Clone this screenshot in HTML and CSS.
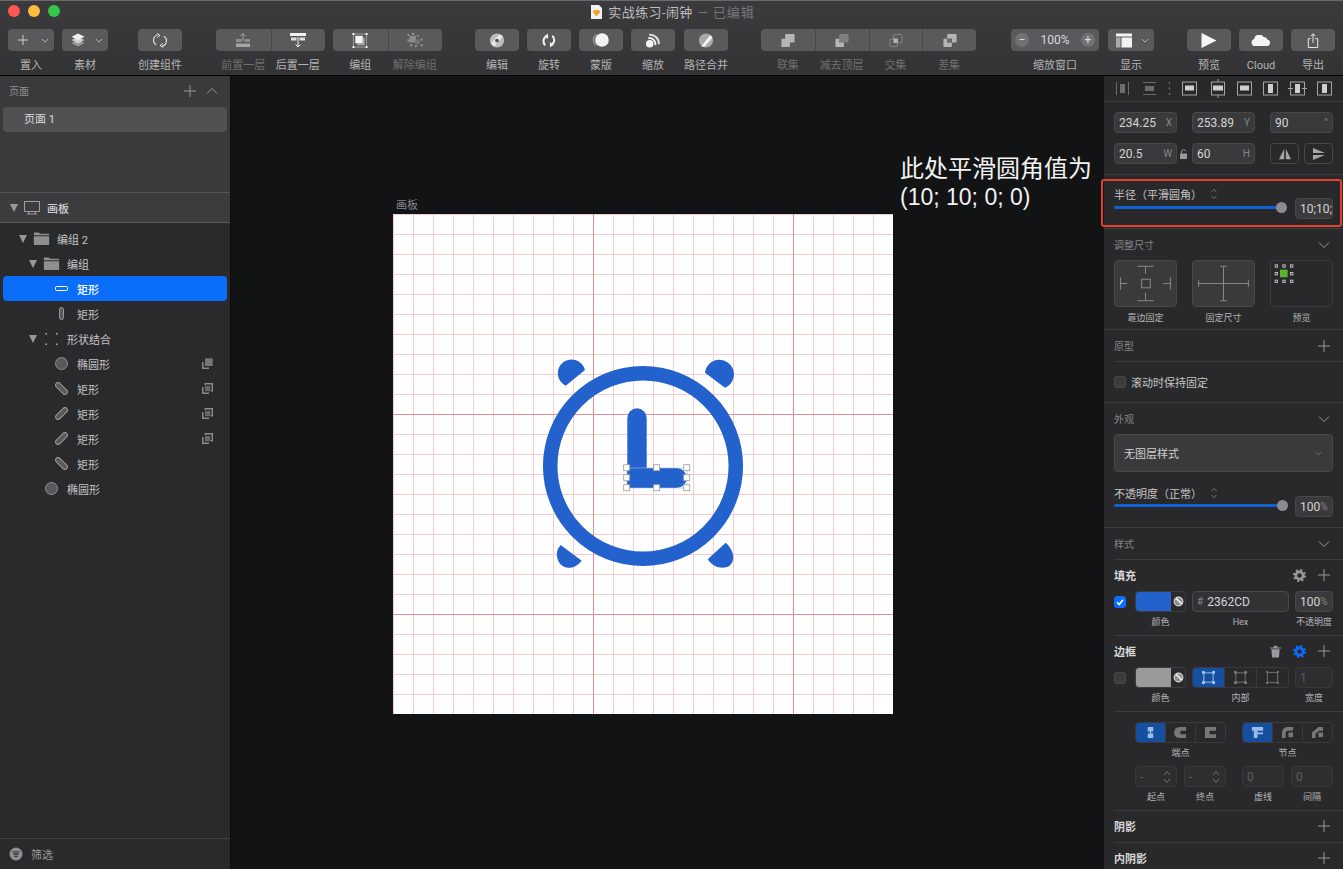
FILE: index.html
```html
<!DOCTYPE html>
<html lang="zh">
<head>
<meta charset="utf-8">
<title>实战练习-闹钟</title>
<link rel="stylesheet" href="styles.css">
</head>
<body>
<svg class="defs" aria-hidden="true">
  <symbol id="plus" viewBox="0 0 12 12"><path d="M6 0v12M0 6h12" fill="none" stroke="currentColor"/></symbol>
  <symbol id="chev" viewBox="0 0 12 8"><path d="M1 1.500l5 5 5-5" fill="none" stroke="currentColor"/></symbol>
  <symbol id="tri" viewBox="0 0 10 8"><path d="M1 0h8L5 8z" fill="currentColor"/></symbol>
  <symbol id="folder" viewBox="0 0 17 14"><path d="M0 1.500C0 .8.5.5 1 .5h4.500L7 2h9c.6 0 1 .3 1 .8v.7H0z M0 4.500h17v8.500c0 .6-.4 1-1 1H1c-.6 0-1-.4-1-1z" fill="#8f8f91"/></symbol>
  <symbol id="ell" viewBox="0 0 13 13"><circle cx="6.500" cy="6.500" r="6" fill="#59595b" stroke="#8f8f91"/></symbol>
  <symbol id="diag1" viewBox="0 0 13 13"><rect x="-.8" y="4" width="14.600" height="5" rx="2.500" transform="rotate(45 6.500 6.500)" fill="#59595b" stroke="#98989a"/></symbol>
  <symbol id="diag2" viewBox="0 0 13 13"><rect x="-.8" y="4" width="14.600" height="5" rx="2.500" transform="rotate(-45 6.500 6.500)" fill="#59595b" stroke="#98989a"/></symbol>
  <symbol id="bool" viewBox="0 0 11 11"><path d="M.8 4v6.200H7" fill="none" stroke="#8b8b8d" stroke-width="1.500"/><path d="M3.300 2.200V.8h7v7H8.600" fill="none" stroke="#8b8b8d" stroke-width="1.400"/><rect x="3" y="3" width="5.200" height="5.200" fill="#68686a"/></symbol>
  <symbol id="boolf" viewBox="0 0 11 11"><path d="M.8 4v6.200H7" fill="none" stroke="#8b8b8d" stroke-width="1.500"/><rect x="3" y=".3" width="7.700" height="7.700" fill="#77777a"/></symbol>
  <symbol id="updown" viewBox="0 0 8 14"><path d="M1 5l3-3.500L7 5M1 9l3 3.500L7 9" fill="none" stroke="currentColor"/></symbol>
  <symbol id="gear" viewBox="0 0 14 14"><circle cx="7" cy="7" r="3.900" fill="none" stroke="currentColor" stroke-width="2.800"/><circle cx="7" cy="7" r="6" fill="none" stroke="currentColor" stroke-width="2" stroke-dasharray="2.300 2.410"/></symbol>
  <symbol id="picker" viewBox="0 0 10 10"><circle cx="5" cy="5" r="4" fill="#8c8c8e" stroke="#d8d8d8"/><path d="M2 2.500l5.500 5.500 1-1.500L3.500 1.500z" fill="#e8e8e8"/></symbol>
  <symbol id="border-box" viewBox="0 0 14 14"><path d="M2 2h10v10H2z" fill="none" stroke="currentColor"/><path d="M0 0h3v3H0zM11 0h3v3h-3zM0 11h3v3H0zM11 11h3v3h-3z" fill="currentColor"/></symbol>
</svg>

<div class="app">
  <header class="toolbar">
    <div class="titlebar">
      <div class="lights"><i class="light red"></i><i class="light amber"></i><i class="light green"></i></div>
      <svg class="doc" viewBox="0 0 11 14"><path d="M0 0h8l3 3v11H0z" fill="#f2f2f2"/><path d="M5.500 11.500L1.800 7l1.200-2h5l1.200 2z" fill="#efa02d"/></svg>
      <span class="title">实战练习-闹钟</span><span class="title-dim">— 已编辑</span>
    </div>
    <div class="tools">
      <div class="tool w46"><div class="btn split"><svg class="i10 bright" viewBox="0 0 12 12"><use href="#plus"/></svg><svg class="ic bright" viewBox="0 0 12 8"><use href="#chev"/></svg></div><span>置入</span></div>
      <div class="tool w46"><div class="btn split"><svg class="i16" viewBox="0 0 16 14"><path d="M8 6.500L1.500 9.500 8 13l6.500-3.500z" fill="#9b9b9b"/><path d="M8 3.500L1.500 6.500 8 10l6.500-3.500z" fill="#cfcfcf"/><path d="M8 0L1.500 3.300 8 6.800l6.500-3.500z" fill="#f0f0f0"/></svg><svg class="ic bright" viewBox="0 0 12 8"><use href="#chev"/></svg></div><span>素材</span></div>
      <div class="tool w44 ml22"><div class="btn"><svg class="i16" viewBox="0 0 14 16"><path d="M5 2.200A5.500 5.500 0 0 0 3 12.500M9 13.800A5.500 5.500 0 0 0 11 3.500" fill="none" stroke="#e4e4e4" stroke-width="1.200"/><path d="M3.500 .5L7 2.500 4 5M10.500 15.500L7 13.500 10 11" fill="none" stroke="#e4e4e4"/></svg></div><span>创建组件</span></div>

      <div class="group w109 ml26">
        <div class="tool off"><div class="btn"><svg class="i16" viewBox="0 0 16 15"><path d="M8 8V1M5.500 3L8 .5 10.500 3" fill="none" stroke="#a5a5a5"/><path d="M1 6h5.500v3H9.500V6H15v3H1z" fill="#8d8d8d"/><rect x="1" y="10.500" width="14" height="3.500" fill="#a5a5a5"/></svg></div><span>前置一层</span></div>
        <div class="tool"><div class="btn"><svg class="i16" viewBox="0 0 16 15"><rect x="0" y="0" width="16" height="3" fill="#f2f2f2"/><path d="M1 4.500h5.500v3H1zM9.500 4.500H15v3H9.500z" fill="#e0e0e0"/><path d="M8 4v10M5.500 11.500L8 14l2.500-2.500" fill="none" stroke="#f2f2f2"/></svg></div><span>后置一层</span></div>
      </div>
      <div class="group w109">
        <div class="tool"><div class="btn"><svg class="i16" viewBox="0 0 16 16"><path d="M1 1h14v14H1z" fill="none" stroke="#bdbdbd" stroke-width=".7"/><rect x="3" y="3" width="8" height="8" fill="#f5f5f5"/><path d="M11 5h2v8H5v-2h6z" fill="#a9a9a9"/><path d="M0 0h2v2H0zM14 0h2v2h-2zM0 14h2v2H0zM14 14h2v2h-2z" fill="#fff"/></svg></div><span>编组</span></div>
        <div class="tool off"><div class="btn"><svg class="i16" viewBox="0 0 16 16"><rect x="2" y="3" width="7" height="7" fill="#8d8d8d"/><rect x="8" y="7" width="5" height="5" fill="#747474"/><path d="M0 1h2v2H0zM5 0h2v2H5zM10 2h2v2h-2zM14 6h2v2h-2zM14 12h2v2h-2zM8 13h2v2H8zM3 12h2v2H3zM0 7h2v2H0z" fill="#9a9a9a"/></svg></div><span>解除编组</span></div>
      </div>

      <div class="tool w44 ml25"><div class="btn"><svg class="i16" viewBox="0 0 16 16"><circle cx="8" cy="8" r="7.500" fill="#bcbcbc"/><path d="M1.500 11L11 1.200l3.500 2.500L5 14.500z" fill="#e9e9e9"/><circle cx="8" cy="8" r="2" fill="#555"/></svg></div><span>编辑</span></div>
      <div class="tool w44"><div class="btn"><svg class="i16" viewBox="0 0 16 16"><path d="M5 3.500A6 6 0 0 0 4 13" fill="none" stroke="#f0f0f0" stroke-width="2.200"/><path d="M11 12.500A6 6 0 0 0 11.500 3" fill="none" stroke="#f0f0f0" stroke-width="2.200"/><path d="M7 .5v6L3 3.500zM9 15.500v-6l4 3z" fill="#f0f0f0"/></svg></div><span>旋转</span></div>
      <div class="tool w44"><div class="btn"><svg class="i18" viewBox="0 0 18 16"><path d="M4 2.500a7 7 0 0 0 0 11" fill="none" stroke="#999" stroke-width="1.200"/><rect x="2.500" y="2.500" width="3" height="11" fill="#7c7c7c"/><circle cx="10" cy="8" r="6.800" fill="#f4f4f4"/></svg></div><span>蒙版</span></div>
      <div class="tool w44"><div class="btn"><svg class="i16" viewBox="0 0 16 16"><circle cx="4.500" cy="11.500" r="4" fill="#f4f4f4"/><path d="M3 5.500A6.500 6.500 0 0 1 10.500 13" fill="none" stroke="#f4f4f4" stroke-width="2.200"/><path d="M4 1.800A9.500 9.500 0 0 1 14.200 12" fill="none" stroke="#e0e0e0" stroke-width="2.200"/></svg></div><span>缩放</span></div>
      <div class="tool w44 ml1"><div class="btn"><svg class="i16" viewBox="0 0 16 16"><circle cx="8" cy="8" r="7.500" fill="#aaa"/><path d="M3 14L12.500 2l2.500 3-9 10z" fill="#f4f4f4"/></svg></div><span>路径合并</span></div>

      <div class="group w215 ml25">
        <div class="tool off"><div class="btn"><svg class="i16" viewBox="0 0 16 16"><path d="M6 1h8c.6 0 1 .4 1 1v7c0 .6-.4 1-1 1h-4v4c0 .6-.4 1-1 1H2c-.6 0-1-.4-1-1V7c0-.6.4-1 1-1h3V2c0-.6.4-1 1-1z" fill="#b5b5b5"/></svg></div><span>联集</span></div>
        <div class="tool off"><div class="btn"><svg class="i16" viewBox="0 0 16 16"><rect x="5" y="1" width="10" height="9" rx="1.500" fill="#808080"/><path d="M2 6h3v4h5v4c0 .6-.4 1-1 1H2c-.6 0-1-.4-1-1V7c0-.6.4-1 1-1z" fill="#b5b5b5"/></svg></div><span>减去顶层</span></div>
        <div class="tool off"><div class="btn"><svg class="i16" viewBox="0 0 16 16"><rect x="5.500" y="1.500" width="9" height="9" rx="1.500" fill="none" stroke="#8a8a8a"/><rect x="1.500" y="6.500" width="8" height="8" rx="1.500" fill="none" stroke="#8a8a8a"/><rect x="5.500" y="6" width="4.500" height="4.500" fill="#b5b5b5"/></svg></div><span>交集</span></div>
        <div class="tool off"><div class="btn"><svg class="i16" viewBox="0 0 16 16"><path d="M6 1h8c.6 0 1 .4 1 1v7c0 .6-.4 1-1 1h-4V6H5V2c0-.6.4-1 1-1zM2 6h3v4h5v4c0 .6-.4 1-1 1H2c-.6 0-1-.4-1-1V7c0-.6.4-1 1-1z" fill="#b5b5b5"/><rect x="5" y="6" width="5" height="4" fill="#6a6a6a"/></svg></div><span>差集</span></div>
      </div>

      <div class="tool w88 ml27"><div class="btn zoom"><i class="zbtn">−</i><b class="zval">100%</b><i class="zbtn">+</i></div><span>缩放窗口</span></div>
      <div class="tool w46 ml1"><div class="btn split"><svg class="i16" viewBox="0 0 16 14"><rect width="16" height="3" fill="#f2f2f2"/><rect y="4" width="4.500" height="10" fill="#aaa"/><rect x="5.500" y="4" width="10.500" height="10" fill="#f2f2f2"/></svg><svg class="ic bright" viewBox="0 0 12 8"><use href="#chev"/></svg></div><span>显示</span></div>

      <div class="tool w44 ml25"><div class="btn"><svg class="i16" viewBox="0 0 14 14"><path d="M0 0l14 7L0 14z" fill="#f6f6f6"/></svg></div><span>预览</span></div>
      <div class="tool w44"><div class="btn"><svg class="i20" viewBox="0 0 20 11"><path d="M4 11a3.500 3.500 0 0 1-.8-6.900A5 5 0 0 1 12.500 2 3.800 3.800 0 0 1 16.500 4.500 3.300 3.300 0 0 1 16 11z" fill="#f6f6f6"/></svg></div><span>Cloud</span></div>
      <div class="tool w44"><div class="btn"><svg class="i16" viewBox="0 0 12 16"><path d="M3.500 6H1v9.500h10V6H8.500" fill="none" stroke="#f2f2f2"/><path d="M6 10.500V1M3.500 3.300L6 .8l2.500 2.500" fill="none" stroke="#f2f2f2"/></svg></div><span>导出</span></div>
    </div>
  </header>

  <div class="main">
    <aside class="layers">
      <section class="pages">
        <div class="pages-head"><span>页面</span><svg class="i12 grey plus-a" viewBox="0 0 12 12"><use href="#plus"/></svg><svg class="i-chev grey flip" viewBox="0 0 12 8"><use href="#chev"/></svg></div>
        <div class="page-item">页面 1</div>
      </section>
      <div class="artboard-row">
        <svg class="tri t-ab" viewBox="0 0 10 8"><use href="#tri"/></svg>
        <svg class="ab-ic" viewBox="0 0 16 14"><path d="M.5.5h15v10H.5zM3 13h10M5 10.500L4.500 13M11 10.500l.5 2.500" fill="none" stroke="#a0a0a2"/></svg>
        <span>画板</span>
      </div>
      <div class="list">
        <div class="layer l0"><svg class="tri" viewBox="0 0 10 8"><use href="#tri"/></svg><svg class="lic" viewBox="0 0 17 14"><use href="#folder"/></svg><span>编组 2</span></div>
        <div class="layer l1"><svg class="tri" viewBox="0 0 10 8"><use href="#tri"/></svg><svg class="lic" viewBox="0 0 17 14"><use href="#folder"/></svg><span>编组</span></div>
        <div class="layer l2 sel"><i class="tri"></i><svg class="lic pill" viewBox="0 0 13 5"><rect x=".5" y=".5" width="12" height="4" rx="1" fill="none" stroke="#fff"/></svg><span>矩形</span></div>
        <div class="layer l2"><i class="tri"></i><svg class="lic" viewBox="0 0 5 13"><rect x=".5" y=".5" width="4" height="12" rx="2" fill="#59595b" stroke="#98989a"/></svg><span>矩形</span></div>
        <div class="layer l1"><svg class="tri" viewBox="0 0 10 8"><use href="#tri"/></svg><svg class="lic small" viewBox="0 0 12 12"><path d="M0 0h1.500v1.500H0zM10.500 0H12v1.500h-1.500zM0 10.500h1.500V12H0zM10.500 10.500H12V12h-1.500z" fill="#b5b5b5"/></svg><span>形状结合</span></div>
        <div class="layer l2"><i class="tri"></i><svg class="lic" viewBox="0 0 13 13"><use href="#ell"/></svg><span>椭圆形</span><svg class="op" viewBox="0 0 11 11"><use href="#boolf"/></svg></div>
        <div class="layer l2"><i class="tri"></i><svg class="lic" viewBox="0 0 13 13"><use href="#diag1"/></svg><span>矩形</span><svg class="op" viewBox="0 0 11 11"><use href="#bool"/></svg></div>
        <div class="layer l2"><i class="tri"></i><svg class="lic" viewBox="0 0 13 13"><use href="#diag2"/></svg><span>矩形</span><svg class="op" viewBox="0 0 11 11"><use href="#bool"/></svg></div>
        <div class="layer l2"><i class="tri"></i><svg class="lic" viewBox="0 0 13 13"><use href="#diag2"/></svg><span>矩形</span><svg class="op" viewBox="0 0 11 11"><use href="#bool"/></svg></div>
        <div class="layer l2"><i class="tri"></i><svg class="lic" viewBox="0 0 13 13"><use href="#diag1"/></svg><span>矩形</span></div>
        <div class="layer l1"><i class="tri"></i><svg class="lic" viewBox="0 0 13 13"><use href="#ell"/></svg><span>椭圆形</span></div>
      </div>
      <div class="filter"><svg class="f-ic" viewBox="0 0 14 14"><circle cx="7" cy="7" r="6.500" fill="#8f8f91"/><path d="M3.500 5h7M4.500 7.200h5M5.500 9.400h3" stroke="#2a2a2c" stroke-width="1.200"/></svg><span>筛选</span></div>
    </aside>

    <main class="canvas">
      <span class="ab-label">画板</span>
      <div class="artboard">
        <svg class="clock" viewBox="393 214 500 500">
          <circle cx="643" cy="466" r="92.800" fill="none" stroke="#2362cd" stroke-width="14.500"/>
          <path d="M585 370A13.800 13.800 0 1 0 565.700 385.700Z" fill="#2362cd"/>
          <path d="M705 372.700A14.500 14.500 0 1 1 725 387.700Z" fill="#2362cd"/>
          <path d="M560.700 545C556 550 555.500 557 559.500 563C564 569.500 574 570 581.700 560.700Z" fill="#2362cd"/>
          <path d="M707.700 559.300C712 566 720 569.500 727 567C735 564 736 552 725.700 542.700Z" fill="#2362cd"/>
          <path d="M627.300 488V418a9.700 9.700 0 0 1 19.400 0V488Z" fill="#2362cd"/>
          <path d="M627 468H676.700a10 10 0 0 1 0 20H627Z" fill="#2362cd"/>
          <rect x="627" y="468" width="60" height="20" fill="none" stroke="#9fb8e6" stroke-width=".6"/>
          <g fill="#fff" stroke="#9a9a9a" stroke-width=".8">
            <rect x="623.700" y="464.700" width="6" height="6"/><rect x="653.700" y="464.700" width="6" height="6"/><rect x="683.700" y="464.700" width="6" height="6"/>
            <rect x="623.700" y="474.700" width="6" height="6"/><rect x="683.700" y="474.700" width="6" height="6"/>
            <rect x="623.700" y="484.700" width="6" height="6"/><rect x="653.700" y="484.700" width="6" height="6"/><rect x="683.700" y="484.700" width="6" height="6"/>
          </g>
        </svg>
      </div>
      <p class="note"><span class="note-a">此处平滑圆角值为</span><span class="note-b">(10; 10; 0; 0)</span></p>
    </main>

    <aside class="inspector">
      <svg class="align-svg" viewBox="0 0 239 25">
        <g fill="none" stroke="#6c6c6e"><path d="M12.500 6v13M24.500 6v13M39 6.500h13M39 18.500h13"/></g>
        <rect x="16" y="8" width="5" height="9" fill="#6c6c6e"/><rect x="41" y="10" width="9" height="5" fill="#6c6c6e"/>
        <path d="M65.500 6v2M65.500 11.500v2M65.500 17v2" stroke="#6c6c6e" stroke-width="1.500"/>
        <g fill="none" stroke="#a5a5a7">
          <rect x="78.500" y="6" width="14" height="13"/><rect x="107.500" y="6" width="13" height="13"/><rect x="133.500" y="6" width="14" height="13"/>
          <rect x="159.500" y="6" width="14" height="13"/><rect x="186.500" y="6" width="14" height="13"/><rect x="213.500" y="6" width="14" height="13"/>
        </g>
        <g fill="#cfcfd1"><rect x="81" y="9.500" width="9" height="5"/><rect x="109" y="9.500" width="10" height="5"/><rect x="136" y="9.500" width="9" height="5"/><rect x="164" y="8" width="5" height="9"/><rect x="191" y="8" width="5" height="9"/><rect x="218" y="8" width="5" height="9"/></g>
        <path d="M114 3v3M114 19v3M184 12.500h5M198 12.500h5" stroke="#a5a5a7"/>
      </svg>

      <section class="sec sec-geom">
        <div class="row3">
          <div class="field"><span>234.25</span><em>X</em></div>
          <div class="field"><span>253.89</span><em>Y</em></div>
          <div class="field"><span>90</span><em>°</em></div>
        </div>
        <div class="row3">
          <div class="field lockwrap"><span>20.5</span><em>W</em><svg class="lock" viewBox="0 0 8 10"><path d="M1.500 4.500V3a2.200 2.200 0 0 1 4.300-.7" fill="none" stroke="#9a9a9c"/><rect y="4.500" width="7" height="5.500" fill="#9a9a9c"/></svg></div>
          <div class="field"><span>60</span><em>H</em></div>
          <div class="flips">
            <div class="field flip-b"><svg class="i12x" viewBox="0 0 14 12"><path d="M6 0v12H0zM8 0v12h6z" fill="#a5a5a7"/></svg></div>
            <div class="field flip-b"><svg class="i12x" viewBox="0 0 12 12"><path d="M0 0l12 5H0zM0 7h12L0 12z" fill="#a5a5a7"/></svg></div>
          </div>
        </div>
      </section>

      <section class="sec sec-radius">
        <div class="lbl-line"><span>半径（平滑圆角）</span><svg class="ud" viewBox="0 0 8 14"><use href="#updown"/></svg></div>
        <div class="slide-row"><div class="slider s-r"><i></i></div><div class="field val"><span>10;10;</span></div></div>
      </section>

      <section class="sec">
        <div class="head"><span>调整尺寸</span><svg class="ic-h grey" viewBox="0 0 12 8"><use href="#chev"/></svg></div>
        <div class="row3 r-box">
          <div class="cbox"><svg viewBox="0 0 63 47"><g fill="none" stroke="#8c8c8e"><path d="M23 5.500h17M31.500 5.500v8M23 41.500h17M31.500 33v8.500M5.500 17v13M5.500 23.500h7M57.500 17v13M50 23.500h7.500"/><rect x="27.500" y="19" width="9" height="9"/></g></svg></div>
          <div class="cbox"><svg viewBox="0 0 63 47"><path d="M5.500 23.500h52M31.500 5.500v36M5.500 20v7M57.500 20v7M28 5.500h7M28 41.500h7" fill="none" stroke="#8c8c8e"/></svg></div>
          <div class="cbox dark"><svg viewBox="0 0 63 47"><rect x="9" y="9" width="8" height="8" fill="#5cb531"/><g fill="none" stroke="#d0d0d0" stroke-width=".9"><rect x="4" y="4" width="2.500" height="2.500"/><rect x="12" y="4" width="2.500" height="2.500"/><rect x="20" y="4" width="2.500" height="2.500"/><rect x="4" y="12" width="2.500" height="2.500"/><rect x="20" y="12" width="2.500" height="2.500"/><rect x="4" y="20" width="2.500" height="2.500"/><rect x="12" y="20" width="2.500" height="2.500"/><rect x="20" y="20" width="2.500" height="2.500"/></g></svg></div>
        </div>
        <div class="row3 caps"><span>靠边固定</span><span>固定尺寸</span><span>预览</span></div>
      </section>

      <section class="sec-plain">
        <div class="head inset-line"><span>原型</span><svg class="i12 grey" viewBox="0 0 12 12"><use href="#plus"/></svg></div>
        <div class="check-row"><i class="cb"></i><span>滚动时保持固定</span></div>
      </section>

      <section class="sec sec-look">
        <div class="head"><span>外观</span><svg class="ic-h grey" viewBox="0 0 12 8"><use href="#chev"/></svg></div>
        <div class="select"><span>无图层样式</span><svg class="ic-s" viewBox="0 0 12 8"><use href="#chev"/></svg></div>
        <div class="lbl-line mt13"><span>不透明度（正常）</span><svg class="ud" viewBox="0 0 8 14"><use href="#updown"/></svg></div>
        <div class="slide-row"><div class="slider"><i></i></div><div class="field val"><span>100</span><em>%</em></div></div>
      </section>

      <section class="sec-bare">
        <div class="head inset-line"><span>样式</span><svg class="ic-h grey" viewBox="0 0 12 8"><use href="#chev"/></svg></div>
      </section>

      <section class="sec-bare">
        <div class="sub-wrap">
          <div class="subhead"><b>填充</b><svg class="gear" viewBox="0 0 14 14"><use href="#gear"/></svg><svg class="i12 grey" viewBox="0 0 12 12"><use href="#plus"/></svg></div>
          <div class="fill-row">
            <i class="cb on"><svg viewBox="0 0 10 10"><path d="M2 5.200l2.200 2.300L8 2.800" fill="none" stroke="#fff" stroke-width="1.600"/></svg></i>
            <div class="swatch"><i class="sw-blue"></i><svg viewBox="0 0 10 10"><use href="#picker"/></svg></div>
            <div class="field hex"><em>#</em><span>2362CD</span></div>
            <div class="field val"><span>100</span><em>%</em></div>
          </div>
          <div class="fill-caps"><span class="c1">颜色</span><span class="c2">Hex</span><span class="c3">不透明度</span></div>
        </div>
      </section>

      <section class="sec-bare">
        <div class="sub-wrap">
          <div class="subhead"><b>边框</b><svg class="trash" viewBox="0 0 12 13"><path d="M0 2h12v1.200H0zM4 .2h4V2H4zM1.500 4h9l-.7 9H2.200z" fill="#9a9a9c"/></svg><svg class="gear gear-on" viewBox="0 0 14 14"><use href="#gear"/></svg><svg class="i12 grey" viewBox="0 0 12 12"><use href="#plus"/></svg></div>
          <div class="fill-row">
            <i class="cb"></i>
            <div class="swatch"><i class="sw-gray"></i><svg viewBox="0 0 10 10"><use href="#picker"/></svg></div>
            <div class="seg w97">
              <div class="on"><svg viewBox="0 0 14 14"><use href="#border-box"/></svg></div>
              <div><svg viewBox="0 0 14 14"><use href="#border-box"/></svg></div>
              <div><svg viewBox="0 0 14 14"><path d="M1.500 1.500h11v11h-11z" fill="none" stroke="currentColor"/><path d="M0 0h2v2H0zM12 0h2v2h-2zM0 12h2v2H0zM12 12h2v2h-2z" fill="currentColor"/></svg></div>
            </div>
            <div class="field val off"><span>1</span></div>
          </div>
          <div class="fill-caps"><span class="c1">颜色</span><span class="c2">内部</span><span class="c3">宽度</span></div>
        </div>
      </section>

      <section class="sec-bare">
        <div class="sub-wrap top10">
          <div class="two-seg">
            <div class="seg">
              <div class="on"><svg viewBox="0 0 14 14"><path d="M4 1h6v5H4zM4 8h6v5H4z" fill="#9dbbe8"/><path d="M7 6v2" stroke="#fff"/></svg></div>
              <div><svg viewBox="0 0 14 14"><path d="M6 1h7v4H7v4h6v4H6A6 6 0 0 1 6 1z" fill="#77777a"/></svg></div>
              <div><svg viewBox="0 0 14 14"><path d="M1 1h12v4H6v4h7v4H1z" fill="#77777a"/></svg></div>
            </div>
            <div class="seg">
              <div class="on"><svg viewBox="0 0 14 14"><path d="M1 1h12v4H7v2h6v2H7v4H3V5H1z" fill="#9dbbe8"/></svg></div>
              <div><svg viewBox="0 0 14 14"><path d="M7 1h6v4H8a3 3 0 0 0-3 3v5H1V7a6 6 0 0 1 6-6z" fill="#77777a"/><rect x="8" y="7" width="5" height="5" fill="#77777a"/></svg></div>
              <div><svg viewBox="0 0 14 14"><path d="M8 1h5v4H9L5 8v5H1V7z" fill="#77777a"/><rect x="8" y="7" width="5" height="5" fill="#77777a"/></svg></div>
            </div>
          </div>
          <div class="two-caps"><span>端点</span><span>节点</span></div>
          <div class="dash-row">
            <div class="field off stepper"><span>-</span><svg class="ud2" viewBox="0 0 8 14"><use href="#updown"/></svg></div>
            <div class="field off stepper"><span>-</span><svg class="ud2" viewBox="0 0 8 14"><use href="#updown"/></svg></div>
            <div class="field off num ml8"><span>0</span></div>
            <div class="field off num"><span>0</span></div>
          </div>
          <div class="dash-caps"><span>起点</span><span>终点</span><span class="ml8">虚线</span><span>间隔</span></div>
        </div>
      </section>

      <section class="sec-bare">
        <div class="head bold"><b>阴影</b><svg class="i12 grey" viewBox="0 0 12 12"><use href="#plus"/></svg></div>
      </section>
      <section class="sec-bare">
        <div class="head bold"><b>内阴影</b><svg class="i12 grey" viewBox="0 0 12 12"><use href="#plus"/></svg></div>
      </section>
    </aside>
  </div>
  <div class="redbox"></div>
</div>
</body>
</html>
```

FILE: styles.css
```css
* { box-sizing: border-box; }
html, body { margin: 0; padding: 0; height: 100%; }
body {
  background: #121315;
  font-family: Roboto, "Noto Sans CJK SC", sans-serif;
  font-size: 11px;
  color: #c4c4c6;
  overflow: hidden;
}
.defs { position: absolute; width: 0; height: 0; }
svg { display: block; flex: none; }
i, em { font-style: normal; }
.app { position: relative; width: 1343px; height: 869px; display: flex; flex-direction: column; overflow: hidden; }

/* toolbar */
.toolbar { height: 76px; flex: none; background: linear-gradient(#3b3b3d, #333335); border-top: 1px solid #6a6a6c; border-bottom: 1px solid #000; }
.titlebar { position: relative; height: 28px; display: flex; justify-content: center; align-items: center; padding: 0 0 7px 3px; }
.lights { position: absolute; left: 8px; top: 4px; display: flex; gap: 8px; }
.light { width: 12px; height: 12px; border-radius: 50%; display: block; }
.red { background: #fc5753; }
.amber { background: #fdbc40; }
.green { background: #33c748; }
.doc { width: 11px; height: 14px; margin-right: 6px; }
.title { font-size: 13px; color: #bdbdbf; letter-spacing: .4px; }
.title-dim { font-size: 13px; color: #77777a; margin-left: 5px; letter-spacing: .9px; }
.tools { display: flex; gap: 8px; padding-left: 8px; }
.tool { display: flex; flex-direction: column; align-items: stretch; text-align: center; }
.tool > span { margin-top: 9px; font-size: 11px; line-height: 12px; height: 12px; color: #b4b4b6; white-space: nowrap; }
.tool.off > span { color: #6f6f71; }
.btn { height: 22px; background: #5a5a5c; border-radius: 4px; display: flex; align-items: center; justify-content: center; }
.btn.split { justify-content: space-between; padding: 0 5px 0 8px; }
.w44 { width: 44px; }
.w46 { width: 46px; }
.w88 { width: 88px; }
.w109 { width: 109px; }
.w215 { width: 215px; }
.ml1 { margin-left: 1px; }
.ml22 { margin-left: 22px; }
.ml25 { margin-left: 25px; }
.ml26 { margin-left: 26px; }
.ml27 { margin-left: 27px; }
.group { display: flex; }
.group .tool { flex: 1 1 0; }
.group .btn { border-radius: 0; border-left: 1px solid #484849; }
.group .tool:first-child .btn { border-radius: 4px 0 0 4px; border-left: 0; }
.group .tool:last-child .btn { border-radius: 0 4px 4px 0; }
.i10 { width: 10px; height: 10px; margin-left: 2px; }
.i12 { width: 12px; height: 12px; }
.i16 { width: 16px; height: 15px; }
.i18 { width: 18px; height: 16px; }
.i20 { width: 20px; height: 11px; }
.ic { width: 8px; height: 5px; }
.ic-h, .i-chev { width: 12px; height: 8px; }
.bright { color: #e8e8e8; }
.grey { color: #98989a; }
.zoom { justify-content: space-between; padding: 0 4px; }
.zbtn { width: 14px; height: 14px; border-radius: 50%; background: #727274; color: #dedede; font-size: 12px; line-height: 14px; text-align: center; display: block; }
.zval { font-weight: 400; font-size: 12px; color: #d8d8da; }

/* layers */
.main { flex: 1; display: flex; min-height: 0; }
.layers { width: 231px; flex: none; background: #2a2a2c; border-right: 1px solid #0c0c0d; display: flex; flex-direction: column; }
.pages { height: 117px; flex: none; background: #3a3a3c; border-bottom: 1px solid #555557; }
.pages-head { height: 31px; display: flex; align-items: center; padding: 0 12px 2px 9px; color: #8f8f91; font-size: 10px; }
.pages-head span { flex: 1; }
.plus-a { margin-right: 10px; }
.flip { transform: scaleY(-1); }
.page-item { height: 25px; margin: 0 3px; padding-left: 21px; background: #515153; border-radius: 4px; line-height: 25px; color: #dcdcde; font-size: 11px; }
.artboard-row { height: 30px; flex: none; display: flex; align-items: center; background: #3c3c3e; border-bottom: 1px solid #58585a; padding-left: 9px; color: #d0d0d2; font-weight: 500; }
.tri { width: 10px; height: 8px; color: #98989a; display: block; flex: none; }
.ab-ic { width: 16px; height: 14px; margin: 0 7px 0 5px; }
.list { flex: 1; padding: 3px 3px 0; }
.layer { height: 25px; display: flex; align-items: center; color: #c4c4c6; border-radius: 4px; }
.layer.l0 { padding-left: 15px; }
.layer.l1 { padding-left: 25px; }
.layer.l2 { padding-left: 35px; }
.layer .lic { width: 17px; height: 13px; margin: 0 7px 0 5px; }
.layer .lic.small { height: 12px; }
.layer .lic.pill { width: 13px; height: 5px; margin: 0 9px 0 7px; }
.layer.sel { background: #0a6efb; color: #fff; font-weight: 500; }
.op { width: 11px; height: 11px; margin-left: auto; margin-right: 14px; }
.filter { height: 31px; flex: none; border-top: 1px solid #3f3f41; display: flex; align-items: center; padding-left: 9px; color: #9a9a9c; gap: 8px; }
.f-ic { width: 14px; height: 14px; }

/* canvas */
.canvas { position: relative; flex: 1; background: #121315; overflow: hidden; }
.ab-label { position: absolute; left: 165px; top: 123px; font-size: 11px; line-height: 14px; color: #8a8a8c; }
.artboard {
  position: absolute; left: 162px; top: 138px; width: 500px; height: 500px;
  background-color: #fff;
  background-image:
    linear-gradient(#e38f91, #e38f91), linear-gradient(#e38f91, #e38f91),
    linear-gradient(#e38f91, #e38f91), linear-gradient(#e38f91, #e38f91),
    linear-gradient(to right, #f7cbcd 1px, transparent 1px),
    linear-gradient(to bottom, #f7cbcd 1px, transparent 1px);
  background-size: 1px 100%, 1px 100%, 100% 1px, 100% 1px, 20px 20px, 20px 20px;
  background-position: 200px 0, 400px 0, 0 200px, 0 400px, 0 0, 0 0;
  background-repeat: no-repeat, no-repeat, no-repeat, no-repeat, repeat, repeat;
}
.clock { width: 500px; height: 500px; }
.note { position: absolute; left: 669px; top: 79px; margin: 0; color: #f2f2f2; white-space: nowrap; font-family: "Liberation Sans", "Noto Sans CJK SC", sans-serif; }
.note-a { display: block; font-size: 24px; line-height: 28px; }
.note-b { display: block; font-size: 23px; line-height: 28px; }

/* inspector */
.inspector { width: 239px; flex: none; background: #29292b; overflow: hidden; display: flex; flex-direction: column; }
.inspector > * { flex: none; }
.align-svg { width: 239px; height: 26px; border-bottom: 1px solid #3d3d3f; }
.sec { padding: 0 10px; border-bottom: 1px solid #3d3d3f; }
.sec-geom { padding-top: 10px; padding-bottom: 10px; display: flex; flex-direction: column; gap: 10px; }
.sec-radius { padding-top: 11px; padding-bottom: 9px; }
.sec-look { padding-bottom: 10px; }
.row3 { display: flex; gap: 15px; }
.row3 > * { width: 63px; }
.field { height: 21px; background: #3a3a3c; border: 1px solid #48484a; border-radius: 4px; padding: 0 4px; display: flex; align-items: center; justify-content: space-between; font-size: 12px; color: #d4d4d6; }
.field em { font-size: 10px; color: #858587; }
.field.off { background: #2e2e30; border-color: #39393b; color: #5e5e60; }
.lockwrap { position: relative; }
.lock { position: absolute; right: -12px; top: 5px; width: 8px; height: 10px; }
.flips { display: flex; justify-content: space-between; }
.flip-b { width: 29px; background: transparent; justify-content: center; padding: 0; }
.i12x { width: 12px; height: 12px; }
.lbl-line { display: flex; align-items: center; height: 14px; padding-top: 1px; color: #c4c4c6; }
.ud { width: 8px; height: 12px; color: #7e7e80; margin-left: 8px; }
.mt13 { margin-top: 13px; }
.slide-row { display: flex; align-items: center; margin-top: -2px; }
.mt13 + .slide-row { margin-top: -3px; }
.slider { position: relative; flex: 1; height: 3px; background: #0f62d6; border-radius: 2px; margin: 0 12px 2px 0; }
.slider i { position: absolute; right: -5px; top: -4px; width: 11px; height: 11px; border-radius: 50%; background: #8c8c90; }
.s-r i { right: -4px; }
.val { width: 38px; flex: none; padding: 0 3px 0 4px; justify-content: flex-start; overflow: hidden; white-space: nowrap; }
.head { height: 31px; display: flex; align-items: center; justify-content: space-between; color: #858587; font-size: 10px; }
.head .ic-h, .head .i12 { margin-right: 3px; }
.head.bold { color: #d8d8da; font-size: 11px; margin-left: 10px; padding: 0 10px 2px 0; height: 32px; border-bottom: 1px solid #3d3d3f; }
.head b, .subhead b { font-weight: 700; }
.cbox { height: 47px; background: #3a3a3c; border: 1px solid #484849; border-radius: 4px; }
.cbox svg { width: 61px; height: 45px; }
.cbox.dark { background: #29292b; border-color: #3a3a3c; }
.caps { margin-top: 5px; padding-bottom: 5px; text-align: center; font-size: 9px; line-height: 12px; color: #b4b4b6; }
.sec-plain { border-bottom: 1px solid #3d3d3f; }
.inset-line { margin-left: 10px; padding-right: 10px; border-bottom: 1px solid #3d3d3f; height: 32px; }
.check-row { height: 40px; display: flex; align-items: center; gap: 5px; padding-left: 10px; color: #c4c4c6; }
.cb { width: 12px; height: 12px; border-radius: 3px; background: #3c3c3e; border: 1px solid #4a4a4c; display: block; flex: none; }
.cb.on { background: #0a6efb; border-color: #0a6efb; }
.cb.on svg { width: 10px; height: 10px; }
.select { height: 38px; background: #3a3a3c; border: 1px solid #48484a; border-radius: 4px; display: flex; align-items: center; justify-content: space-between; padding: 0 10px 0 9px; color: #d0d0d2; }
.ic-s { width: 7px; height: 5px; color: #98989a; }
.sub-wrap { margin-left: 10px; padding-bottom: 7px; border-bottom: 1px solid #3d3d3f; }
.top10 { padding-top: 10px; }
.subhead { height: 30px; margin-bottom: 1px; display: flex; align-items: center; justify-content: flex-end; gap: 12px; color: #d8d8da; padding-right: 13px; }
.subhead b { margin-right: auto; }
.gear { width: 13px; height: 13px; color: #98989a; }
.gear-on { color: #0a6efb; }
.trash { width: 11px; height: 13px; }
.fill-row { display: flex; align-items: center; height: 21px; padding-right: 10px; }
.fill-row > .cb { margin-right: 9px; }
.swatch { width: 51px; height: 21px; display: flex; align-items: center; border: 1px solid #3d3d3f; border-radius: 4px; overflow: hidden; margin-right: 6px; }
.swatch i { display: block; width: 35px; height: 21px; }
.swatch svg { width: 11px; height: 11px; margin-left: 2px; }
.sw-blue { background: #2362cd; }
.sw-gray { background: #9a9a9a; }
.hex { width: 97px; justify-content: flex-start; gap: 4px; margin-right: 6px; background: #333335; }
.seg { display: flex; height: 21px; width: 91px; border: 1px solid #3a3a3c; border-radius: 4px; overflow: hidden; color: #77777a; }
.seg > div { flex: 1; display: flex; align-items: center; justify-content: center; border-left: 1px solid #3a3a3c; }
.seg > div:first-child { border-left: 0; }
.seg .on { background: #14509f; color: #a8c4ec; }
.seg svg { width: 13px; height: 13px; }
.w97 { width: 97px; margin-right: 6px; }
.fill-caps { display: flex; margin-top: 4px; font-size: 9px; line-height: 12px; color: #b4b4b6; text-align: center; height: 12px; }
.c1 { width: 51px; margin-left: 21px; margin-right: 6px; }
.c2 { width: 97px; margin-right: 6px; }
.c3 { width: 38px; white-space: nowrap; }
.two-seg { display: flex; gap: 16px; padding-left: 21px; }
.two-caps { display: flex; gap: 16px; padding-left: 21px; margin-top: 4px; font-size: 9px; line-height: 12px; color: #b4b4b6; }
.two-caps span { width: 91px; text-align: center; }
.dash-row { display: flex; gap: 7px; padding-left: 21px; margin-top: 7px; }
.dash-row .field { width: 42px; }
.dash-row .ml8, .dash-caps .ml8 { margin-left: 9px; }
.ud2 { width: 8px; height: 14px; color: #77777a; margin-right: 1px; }
.dash-caps { display: flex; gap: 7px; padding-left: 21px; margin-top: 4px; font-size: 9px; line-height: 12px; color: #b4b4b6; }
.dash-caps span { width: 42px; text-align: center; }

/* annotation frame that lies over the canvas edge and the inspector */
.redbox { position: absolute; left: 1101px; top: 179px; width: 241px; height: 48px; border: 2px solid #e5402d; border-radius: 3px; pointer-events: none; }
```
